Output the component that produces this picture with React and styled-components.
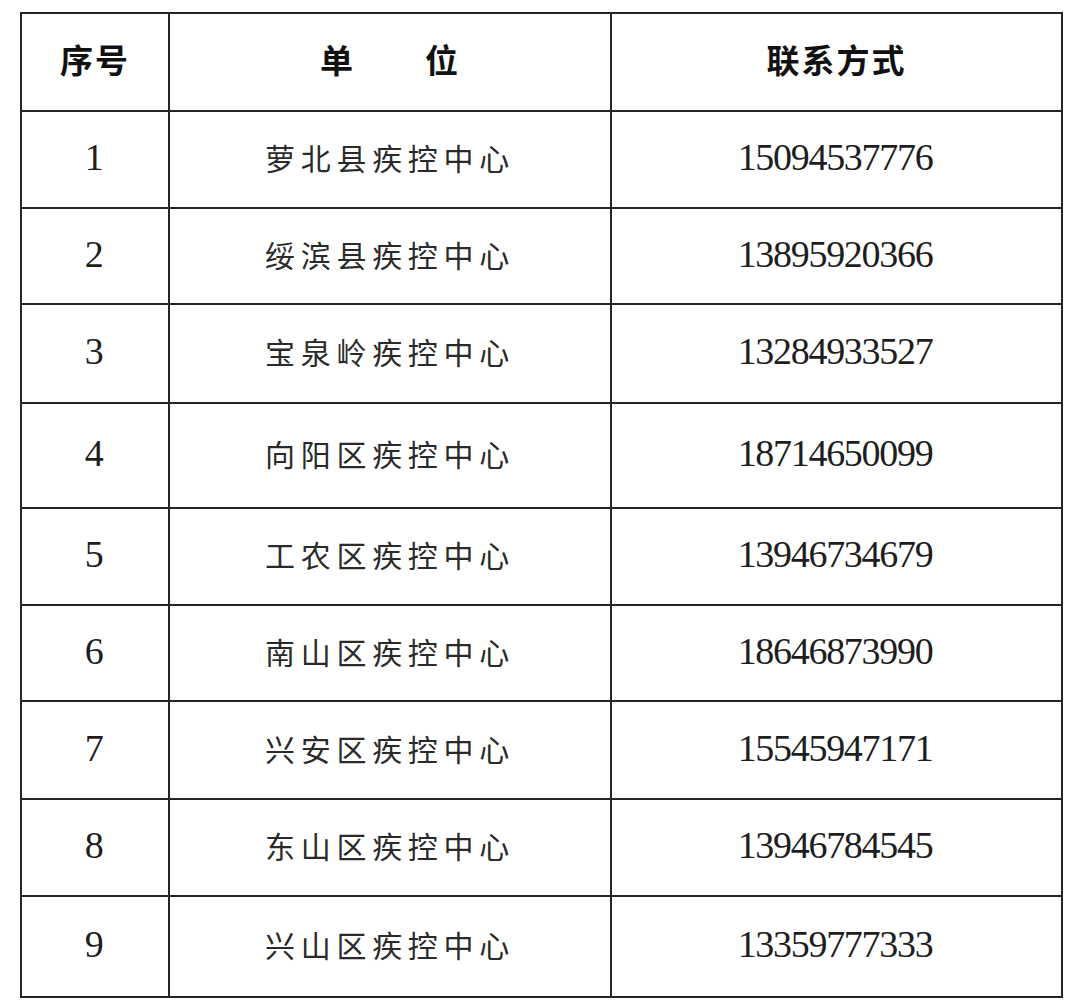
import styled, { createGlobalStyle } from "styled-components";

const GlobalStyle = createGlobalStyle`
  html, body {
    margin: 0;
    padding: 0;
    background: #ffffff;
  }
`;

const Page = styled.div`
  padding: 12px 0 0 20px;
`;

const Table = styled.table`
  border-collapse: collapse;
  table-layout: fixed;
  width: 1041px;
  color: #1c1c1c;
`;

const Col = styled.col`
  width: ${(p) => p.$w}px;
`;

const Row = styled.tr`
  height: ${(p) => p.$h}px;
`;

const Cell = styled.td`
  border: 2px solid #262626;
  padding: 0 0 5px;
  text-align: center;
  vertical-align: middle;
`;

const HeadCell = styled(Cell)`
  font-family: "Noto Sans CJK SC", serif;
  font-weight: 700;
  font-size: 33px;
  letter-spacing: 2px;
  color: #111;
  padding-bottom: 6px;
`;

const NumCell = styled(Cell)`
  font-family: "Liberation Serif", "Noto Sans CJK SC", serif;
  font-size: 38px;
  letter-spacing: -1.3px;
  color: #1e1e1e;
  padding-right: 3px;
`;

const NameCell = styled(Cell)`
  font-family: "Noto Sans CJK SC", sans-serif;
  font-weight: 400;
  font-size: 30px;
  letter-spacing: 5.7px;
  color: #2a2a2a;
`;

const rows = [
  { n: 1, name: "萝北县疾控中心", tel: "15094537776", h: 97 },
  { n: 2, name: "绥滨县疾控中心", tel: "13895920366", h: 96 },
  { n: 3, name: "宝泉岭疾控中心", tel: "13284933527", h: 99 },
  { n: 4, name: "向阳区疾控中心", tel: "18714650099", h: 105 },
  { n: 5, name: "工农区疾控中心", tel: "13946734679", h: 97 },
  { n: 6, name: "南山区疾控中心", tel: "18646873990", h: 96 },
  { n: 7, name: "兴安区疾控中心", tel: "15545947171", h: 98 },
  { n: 8, name: "东山区疾控中心", tel: "13946784545", h: 97 },
  { n: 9, name: "兴山区疾控中心", tel: "13359777333", h: 101 },
];

export default function App() {
  return (
    <Page>
      <GlobalStyle />
      <Table>
        <colgroup>
          <Col $w={148} />
          <Col $w={442} />
          <Col $w={451} />
        </colgroup>
        <tbody>
          <Row $h={98}>
            <HeadCell>序号</HeadCell>
            <HeadCell>单　　位</HeadCell>
            <HeadCell>联系方式</HeadCell>
          </Row>
          {rows.map((r) => (
            <Row key={r.n} $h={r.h}>
              <NumCell>{r.n}</NumCell>
              <NameCell>{r.name}</NameCell>
              <NumCell>{r.tel}</NumCell>
            </Row>
          ))}
        </tbody>
      </Table>
    </Page>
  );
}
